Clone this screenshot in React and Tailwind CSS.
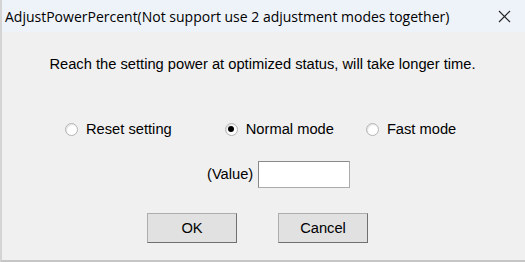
import React from "react";

const sans = { fontFamily: '"Liberation Sans", Arial, sans-serif' };

function Radio({ checked, label, className }) {
  return (
    <div className={`flex items-center ${className}`}>
      <span className="w-[13px] h-[13px] rounded-full border border-[#b4b4b4] bg-white flex items-center justify-center shadow-[inset_1px_1px_1px_rgba(0,0,0,0.12)]">
        {checked && <span className="w-[6px] h-[6px] rounded-full bg-black" />}
      </span>
      <span className="ml-[8px] text-[14.7px] text-black">{label}</span>
    </div>
  );
}

function WinButton({ children, className }) {
  return (
    <button className={`w-[90px] h-[30px] bg-[#e1e1e1] border border-[#adadad] border-r-[#707070] border-b-[#707070] text-[14.7px] text-black ${className}`}>
      {children}
    </button>
  );
}

export default function App() {
  return (
    <div className="w-[525px] h-[262px] bg-[#f0f0f0] flex flex-col border-l-2 border-l-[#d4d4d4] border-b-2 border-b-[#c6c6c6]" style={sans}>
      {/* Title bar */}
      <div className="h-[32px] bg-[#eef3fa] flex items-center justify-between pl-[3px] pr-[14px]">
        <span className="text-[14px] text-black" style={{ fontFamily: '"Open Sans", "Noto Sans", sans-serif' }}>
          AdjustPowerPercent(Not support use 2 adjustment modes together)
        </span>
        <svg width="13" height="13" viewBox="0 0 13 13" className="text-[#222]">
          <path d="M1 1 L12 12 M12 1 L1 12" stroke="currentColor" strokeWidth="1.1" fill="none" />
        </svg>
      </div>

      {/* Body */}
      <div className="flex-1 flex flex-col">
        <p className="mt-[21px] h-[22px] leading-[22px] text-[14.7px] text-black text-center pr-[2px]">
          Reach the setting power at optimized status, will take longer time.
        </p>

        <div className="mt-[45px] flex items-center h-[18px]">
          <Radio label="Reset setting" className="ml-[63px]" />
          <Radio checked label="Normal mode" className="ml-[53px]" />
          <Radio label="Fast mode" className="ml-[32px]" />
        </div>

        <div className="mt-[23px] flex items-center">
          <span className="ml-[205px] text-[14.7px] text-black">(Value)</span>
          <div className="ml-[5px] w-[92px] h-[27px] bg-white border border-[#ababab] border-t-[#8a8a8a] border-l-[#8a8a8a]" />
        </div>

        <div className="mt-[25px] flex items-center">
          <WinButton className="ml-[145px]">OK</WinButton>
          <WinButton className="ml-[41px]">Cancel</WinButton>
        </div>
      </div>
    </div>
  );
}
